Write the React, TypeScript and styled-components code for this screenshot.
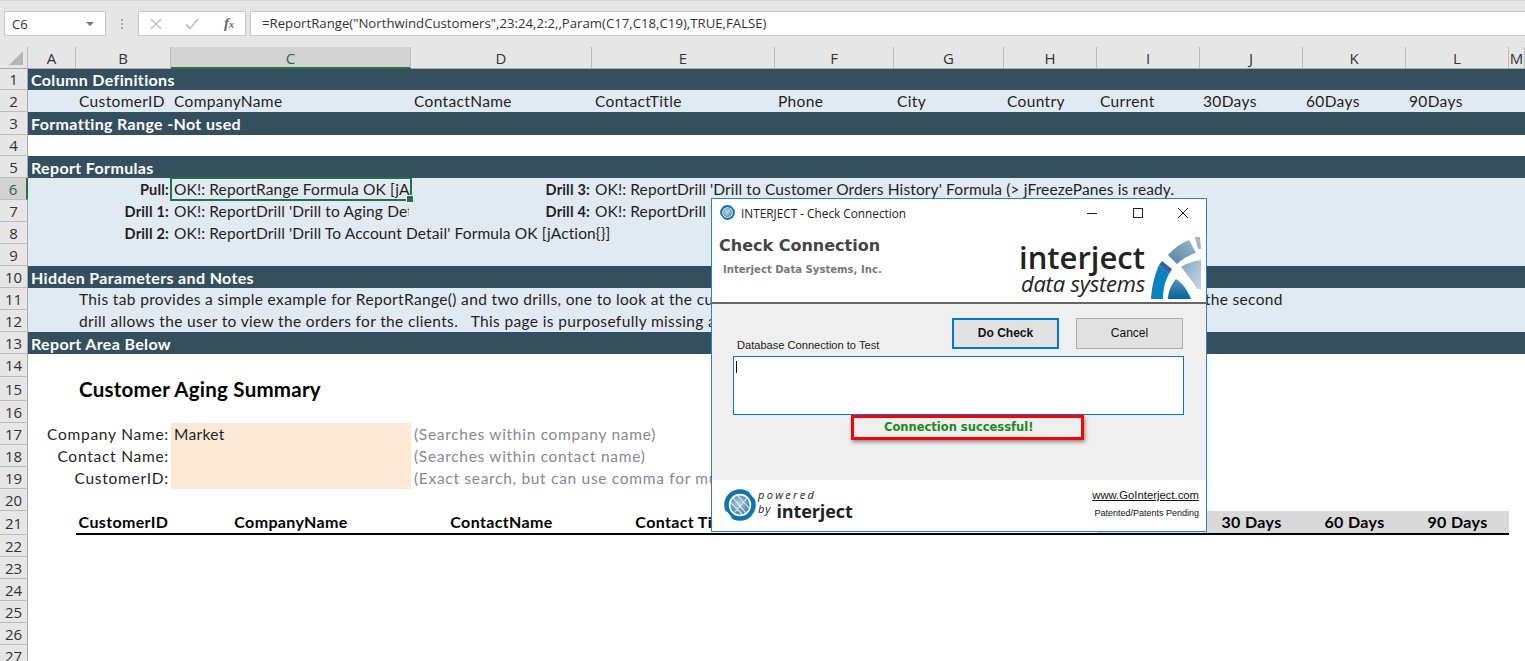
import React from 'react';
import styled, { createGlobalStyle, css } from 'styled-components';

const SHEET_FONT = `'Lato', 'Open Sans', sans-serif`;
const UI_FONT = `'Open Sans', 'Liberation Sans', sans-serif`;
const COLUMNS = '28px 48px 95px 240px 181px 183px 119px 110px 93px 103px 103px 103px 103px 1fr';
const HEADERS = ['A', 'B', 'C', 'D', 'E', 'F', 'G', 'H', 'I', 'J', 'K', 'L', 'M'];

// Rows are 22px unless the sheet says otherwise
const ROW_HEIGHTS: { [n: number]: number } = { 1: 21, 3: 23, 4: 21, 14: 23, 15: 24, 21: 24 };
const heightOf = (n: number) => ROW_HEIGHTS[n] || 22;

type Tone = 'plain' | 'dark' | 'light';
type CellKind = 'text' | 'heading' | 'label' | 'status';

type CellType = {
  col: number,
  span?: number,
  text: string,
  kind?: CellKind,
  clip?: boolean,
};

type RowType = {
  n: number,
  tone?: Tone,
  cells?: CellType[],
};

const ROWS: RowType[] = [
  { n: 1, tone: 'dark', cells: [{ col: 1, span: 4, text: 'Column Definitions', kind: 'heading' }] },
  {
    n: 2,
    tone: 'light',
    cells: [
      { col: 2, text: 'CustomerID' },
      { col: 3, text: 'CompanyName' },
      { col: 4, text: 'ContactName' },
      { col: 5, text: 'ContactTitle' },
      { col: 6, text: 'Phone' },
      { col: 7, text: 'City' },
      { col: 8, text: 'Country' },
      { col: 9, text: 'Current' },
      { col: 10, text: '30Days' },
      { col: 11, text: '60Days' },
      { col: 12, text: '90Days' },
    ],
  },
  { n: 3, tone: 'dark', cells: [{ col: 1, span: 4, text: 'Formatting Range -Not used', kind: 'heading' }] },
  { n: 4 },
  { n: 5, tone: 'dark', cells: [{ col: 1, span: 4, text: 'Report Formulas', kind: 'heading' }] },
  {
    n: 6,
    tone: 'light',
    cells: [
      { col: 2, text: 'Pull:', kind: 'label' },
      { col: 3, text: 'OK!: ReportRange Formula OK [jAction{}]', kind: 'status', clip: true },
      { col: 4, text: 'Drill 3:', kind: 'label' },
      { col: 5, text: `OK!: ReportDrill 'Drill to Customer Orders History' Formula (> jFreezePanes is ready.`, kind: 'status' },
    ],
  },
  {
    n: 7,
    tone: 'light',
    cells: [
      { col: 2, text: 'Drill 1:', kind: 'label' },
      { col: 3, text: `OK!: ReportDrill 'Drill to Aging Detail' Formula OK`, kind: 'status', clip: true },
      { col: 4, text: 'Drill 4:', kind: 'label' },
      { col: 5, text: `OK!: ReportDrill 'Drill to Orders' Formula OK`, kind: 'status' },
    ],
  },
  {
    n: 8,
    tone: 'light',
    cells: [
      { col: 2, text: 'Drill 2:', kind: 'label' },
      { col: 3, text: `OK!: ReportDrill 'Drill To Account Detail' Formula OK [jAction{}]`, kind: 'status' },
    ],
  },
  { n: 9, tone: 'light' },
  { n: 10, tone: 'dark', cells: [{ col: 1, span: 4, text: 'Hidden Parameters and Notes', kind: 'heading' }] },
  {
    n: 11,
    tone: 'light',
    cells: [
      { col: 2, text: 'This tab provides a simple example for ReportRange() and two drills, one to look at the customer aging detail and the account information for every client, and the second' },
    ],
  },
  {
    n: 12,
    tone: 'light',
    cells: [
      { col: 2, text: 'drill allows the user to view the orders for the clients.   This page is purposefully missing a' },
    ],
  },
  { n: 13, tone: 'dark', cells: [{ col: 1, span: 4, text: 'Report Area Below', kind: 'heading' }] },
];

const FILTERS = [
  { n: 17, label: 'Company Name:', value: 'Market', hint: '(Searches within company name)' },
  { n: 18, label: 'Contact Name:', value: '', hint: '(Searches within contact name)' },
  { n: 19, label: 'CustomerID:', value: '', hint: '(Exact search, but can use comma for multiple)' },
];

const TABLE_HEADERS = [
  { col: 2, text: 'CustomerID' },
  { col: 3, text: 'CompanyName' },
  { col: 4, text: 'ContactName' },
  { col: 5, text: 'Contact Title' },
  { col: 6, text: 'Phone' },
  { col: 7, text: 'City' },
  { col: 8, text: 'Country' },
  { col: 9, text: 'Current', gray: true },
  { col: 10, text: '30 Days', gray: true },
  { col: 11, text: '60 Days', gray: true },
  { col: 12, text: '90 Days', gray: true },
];

const LogoMark = () => (
  <svg width="52" height="62" viewBox="0 0 52 62">
    <defs>
      <linearGradient id="arcTop" x1="0" y1="1" x2="1" y2="0">
        <stop offset="0" stopColor="#4f80a0" />
        <stop offset="1" stopColor="#9db9ca" />
      </linearGradient>
      <linearGradient id="panel" x1="0" y1="0" x2="1" y2="1">
        <stop offset="0" stopColor="#7fa6bf" />
        <stop offset="1" stopColor="#c6d8e2" />
      </linearGradient>
      <linearGradient id="wedge" x1="0" y1="0" x2="0" y2="1">
        <stop offset="0" stopColor="#5c93b2" />
        <stop offset="1" stopColor="#00659f" />
      </linearGradient>
    </defs>
    <path d="M2 62 C3 48 6 37 10 28 L20 37 C16 44 14 52 14 62 Z" fill="#0a82bf" />
    <path d="M10 28 L13 24 L23 32 L20 37 Z" fill="#2d62ad" />
    <path d="M19 18 C25 11 32 6 40 3 L47 16 C40 18 33 22 28 27 Z" fill="url(#arcTop)" />
    <path d="M46 0 L51 0 L52 12 L49 12 Z" fill="#9db9ca" />
    <path d="M32 30 C38 26 45 24 52 23 L52 52 L48 52 C44 45 38 37 32 30 Z" fill="url(#panel)" />
    <path d="M27 42 C33 46 38 52 42 62 L19 62 C19 55 22 48 27 42 Z" fill="url(#wedge)" />
  </svg>
);

const Globe = ({ size, id }: { size: number, id: string }) => (
  <svg width={size} height={size} viewBox="0 0 32 32">
    <defs>
      <radialGradient id={id} cx="0.45" cy="0.4" r="0.7">
        <stop offset="0" stopColor="#b4cddd" />
        <stop offset="1" stopColor="#2f76a5" />
      </radialGradient>
    </defs>
    <circle cx="16" cy="16" r="13.5" fill="none" stroke="#0f74ad" strokeWidth="4.5" />
    <circle cx="16" cy="16" r="9.5" fill={`url(#${id})`} />
    <path d="M9 9 L22 24 M14 7 L25 19 M7 14 L18 25 M11 23 L23 9" stroke="#e3edf3" strokeWidth="1.1" />
    <path d="M26 3 L31 9 M2 23 L7 29" stroke="#ffffff" strokeWidth="2" />
  </svg>
);

export default function App() {
  return (
    <Page>
      <GlobalStyle />
      <FormulaBar>
        <NameBox>
          <span>C6</span>
          <Caret />
        </NameBox>
        <Grip>
          <i />
          <i />
          <i />
        </Grip>
        <FormulaButtons>
          <svg width="12" height="12" viewBox="0 0 12 12">
            <path d="M1 1 L11 11 M11 1 L1 11" stroke="#c4c4c4" strokeWidth="1.6" />
          </svg>
          <svg width="14" height="12" viewBox="0 0 14 12">
            <path d="M1 6.5 L5 10.5 L13 1" stroke="#c4c4c4" strokeWidth="1.8" fill="none" />
          </svg>
          <FxLabel>f<sub>x</sub></FxLabel>
        </FormulaButtons>
        <FormulaInput>=ReportRange("NorthwindCustomers",23:24,2:2,,Param(C17,C18,C19),TRUE,FALSE)</FormulaInput>
      </FormulaBar>

      <HeaderRow>
        <Corner>
          <svg width="14" height="14" viewBox="0 0 14 14">
            <path d="M14 0 L14 14 L0 14 Z" fill="#b5b5b5" />
          </svg>
        </Corner>
        {HEADERS.map((h) => (
          <ColHeader key={h} $active={h === 'C'}>{h}</ColHeader>
        ))}
      </HeaderRow>

      <Sheet>
        {ROWS.map((row) => (
          <Row key={row.n} $tone={row.tone || 'plain'} $height={heightOf(row.n)}>
            <RowHeader $active={row.n === 6}>{row.n}</RowHeader>
            {(row.cells || []).map((c, i) => (
              <Cell
                key={i}
                $col={c.col}
                $span={c.span || 1}
                $kind={c.kind || 'text'}
                $selected={row.n === 6 && c.col === 3}
              >
                <CellText $clip={!!c.clip}>{c.text}</CellText>
              </Cell>
            ))}
          </Row>
        ))}

        <Row $tone="plain" $height={heightOf(14)}><RowHeader>14</RowHeader></Row>
        <Row $tone="plain" $height={heightOf(15)}>
          <RowHeader>15</RowHeader>
          <ReportTitle>Customer Aging Summary</ReportTitle>
        </Row>
        <Row $tone="plain" $height={heightOf(16)}><RowHeader>16</RowHeader></Row>

        {FILTERS.map((f) => (
          <Row key={f.n} $tone="plain" $height={heightOf(f.n)}>
            <RowHeader>{f.n}</RowHeader>
            <FilterLabel>{f.label}</FilterLabel>
            <InputCell>{f.value}</InputCell>
            <HintCell>{f.hint}</HintCell>
          </Row>
        ))}

        <Row $tone="plain" $height={heightOf(20)}><RowHeader>20</RowHeader></Row>
        <Row $tone="plain" $height={heightOf(21)}>
          <RowHeader>21</RowHeader>
          {TABLE_HEADERS.map((h) => (
            <TableHead key={h.col} $col={h.col} $gray={!!h.gray}>{h.text}</TableHead>
          ))}
        </Row>
        {[22, 23, 24, 25, 26, 27].map((n) => (
          <Row key={n} $tone="plain" $height={heightOf(n)}><RowHeader>{n}</RowHeader></Row>
        ))}
      </Sheet>

      <Dialog>
        <TitleBar>
          <Globe size={15} id="globeSmall" />
          <TitleText>INTERJECT - Check Connection</TitleText>
          <WindowButtons>
            <svg width="12" height="12" viewBox="0 0 12 12"><path d="M1 6.5 L11 6.5" stroke="#222" strokeWidth="1" /></svg>
            <svg width="12" height="12" viewBox="0 0 12 12"><rect x="1.5" y="1.5" width="9" height="9" fill="none" stroke="#222" strokeWidth="1" /></svg>
            <svg width="12" height="12" viewBox="0 0 12 12"><path d="M1 1 L11 11 M11 1 L1 11" stroke="#222" strokeWidth="1" /></svg>
          </WindowButtons>
        </TitleBar>

        <Banner>
          <BannerText>
            <BannerTitle>Check Connection</BannerTitle>
            <BannerSub>Interject Data Systems, Inc.</BannerSub>
          </BannerText>
          <BrandLogo>
            <BrandText>
              <BrandName>interject</BrandName>
              <BrandTag>data systems</BrandTag>
            </BrandText>
            <LogoMark />
          </BrandLogo>
        </Banner>

        <DialogBody>
          <ButtonRow>
            <FieldLabel>Database Connection to Test</FieldLabel>
            <DialogButton $primary>Do Check</DialogButton>
            <DialogButton>Cancel</DialogButton>
          </ButtonRow>
          <TextBox><TextCaret /></TextBox>
          <StatusWrap>
            <StatusBox>Connection successful!</StatusBox>
          </StatusWrap>
        </DialogBody>

        <DialogFooter>
          <Powered>
            <Globe size={32} id="globeLarge" />
            <PoweredText>
              <PoweredTop>powered</PoweredTop>
              <PoweredBottom>
                <em>by</em>
                <strong>interject</strong>
              </PoweredBottom>
            </PoweredText>
          </Powered>
          <FooterLinks>
            <FooterLink>www.GoInterject.com</FooterLink>
            <FooterNote>Patented/Patents Pending</FooterNote>
          </FooterLinks>
        </DialogFooter>
      </Dialog>
    </Page>
  );
}

const GlobalStyle = createGlobalStyle`
  html, body {
    margin: 0;
    padding: 0;
    background: #ffffff;
    overflow: hidden;
  }
  * {
    box-sizing: border-box;
  }
`;

const Page = styled.div`
  position: relative;
  width: 1525px;
  height: 661px;
  overflow: hidden;
  font-family: ${SHEET_FONT};
  background: #ffffff;
`;

const FormulaBar = styled.div`
  display: flex;
  align-items: center;
  height: 47px;
  padding: 0 0 1px 4px;
  background: #e6e6e6;
  border-top: 1px solid #d8d8d8;
`;

const boxStyle = css`
  height: 25px;
  background: #ffffff;
  border: 1px solid #c9c9c9;
`;

const NameBox = styled.div`
  ${boxStyle}
  width: 102px;
  display: flex;
  align-items: center;
  justify-content: space-between;
  padding: 0 11px 0 7px;
  font-family: ${UI_FONT};
  font-size: 13px;
  color: #333333;
`;

const Caret = styled.div`
  width: 0;
  height: 0;
  border-left: 4px solid transparent;
  border-right: 4px solid transparent;
  border-top: 4px solid #777777;
`;

const Grip = styled.div`
  width: 32px;
  display: flex;
  flex-direction: column;
  align-items: center;
  gap: 2px;

  > i {
    width: 2px;
    height: 2px;
    background: #a8a8a8;
  }
`;

const FormulaButtons = styled.div`
  ${boxStyle}
  width: 108px;
  display: flex;
  align-items: center;
  justify-content: space-between;
  padding: 0 11px 0 11px;

  > svg:nth-child(2) {
    margin-left: -3px;
  }
`;

const FxLabel = styled.div`
  font-family: 'Liberation Serif', serif;
  font-size: 15px;
  font-style: italic;
  font-weight: 700;
  color: #6a6a6a;
  line-height: 15px;

  > sub {
    font-size: 10px;
    vertical-align: baseline;
  }
`;

const FormulaInput = styled.div`
  ${boxStyle}
  flex: 1;
  margin-left: 4px;
  padding-left: 11px;
  border-right: none;
  line-height: 23px;
  font-family: ${UI_FONT};
  font-size: 13.2px;
  color: #333333;
  white-space: nowrap;
`;

const HeaderRow = styled.div`
  display: grid;
  grid-template-columns: ${COLUMNS};
  height: 22px;
  background: #e6e6e6;
  border-bottom: 1px solid #a9a9a9;
`;

const Corner = styled.div`
  display: flex;
  align-items: flex-end;
  justify-content: flex-end;
  padding: 0 4px 3px 0;
  border-right: 1px solid #bcbcbc;
`;

const ColHeader = styled.div<{ $active?: boolean }>`
  display: flex;
  align-items: center;
  justify-content: center;
  height: 21px;
  font-family: ${UI_FONT};
  font-size: 15px;
  color: ${(props) => (props.$active ? '#1e6b44' : '#333333')};
  background: ${(props) => (props.$active ? '#d2d2d2' : 'transparent')};
  border-right: 1px solid #bcbcbc;
  box-shadow: ${(props) => (props.$active ? 'inset 0 -1px 0 #217346, 0 1px 0 #217346' : 'none')};
`;

const Sheet = styled.div`
  width: 100%;
`;

const toneColors = {
  plain: { bg: '#ffffff', fg: '#1f1f1f' },
  dark: { bg: '#344f5e', fg: '#ffffff' },
  light: { bg: '#e1eaf0', fg: '#1f1f1f' },
};

const Row = styled.div<{ $tone: Tone, $height: number }>`
  display: grid;
  grid-template-columns: ${COLUMNS};
  height: ${(props) => props.$height}px;
  align-items: center;
  background: ${(props) => toneColors[props.$tone].bg};
  color: ${(props) => toneColors[props.$tone].fg};
  font-size: 15.5px;
  letter-spacing: 0.35px;
  white-space: pre;
`;

const RowHeader = styled.div<{ $active?: boolean }>`
  grid-column: 1;
  grid-row: 1;
  align-self: stretch;
  display: flex;
  align-items: center;
  justify-content: center;
  font-family: ${UI_FONT};
  font-size: 15px;
  letter-spacing: 0;
  color: ${(props) => (props.$active ? '#1e6b44' : '#333333')};
  background: ${(props) => (props.$active ? '#d2d2d2' : '#e6e6e6')};
  border-right: ${(props) => (props.$active ? '2px solid #217346' : '1px solid #a9a9a9')};
  border-bottom: 1px solid #bcbcbc;
`;

const cellKinds = {
  text: css`
    font-weight: 400;
  `,
  status: css`
    font-weight: 400;
    letter-spacing: 0.12px;
  `,
  heading: css`
    font-size: 16px;
    font-weight: 700;
  `,
  label: css`
    justify-content: flex-end;
    font-size: 14.5px;
    font-weight: 700;
    letter-spacing: 0.2px;
  `,
};

const Cell = styled.div<{
  $col: number,
  $span: number,
  $kind: CellKind,
  $selected: boolean,
}>`
  grid-column: ${(props) => props.$col + 1} / span ${(props) => props.$span};
  grid-row: 1;
  align-self: stretch;
  display: flex;
  align-items: center;
  padding: 0 2px 0 3px;
  position: relative;
  min-width: 0;
  ${(props) => cellKinds[props.$kind]}
  ${(props) => props.$selected && css`
    padding-right: 0;
    outline: 2px solid #217346;
    outline-offset: -1px;

    &::after {
      content: '';
      position: absolute;
      right: -3px;
      bottom: -3px;
      width: 6px;
      height: 6px;
      background: #217346;
      border: 1px solid #ffffff;
    }
  `}
`;

const CellText = styled.div<{ $clip: boolean }>`
  min-width: 0;
  overflow: ${(props) => (props.$clip ? 'hidden' : 'visible')};
`;

const ReportTitle = styled.div`
  grid-column: 3 / span 4;
  grid-row: 1;
  padding-left: 3px;
  font-size: 20.5px;
  font-weight: 700;
  letter-spacing: 0.25px;
  color: #000000;
`;

const FilterLabel = styled.div`
  grid-column: 2 / span 2;
  grid-row: 1;
  padding-right: 2px;
  text-align: right;
  letter-spacing: 0.75px;
`;

const InputCell = styled.div`
  grid-column: 4;
  grid-row: 1;
  align-self: stretch;
  display: flex;
  align-items: center;
  padding-left: 3px;
  background: #fde9d3;
`;

const HintCell = styled.div`
  grid-column: 5 / span 4;
  grid-row: 1;
  padding-left: 3px;
  color: #8b8690;
  letter-spacing: 0.7px;
`;

const TableHead = styled.div<{ $col: number, $gray: boolean }>`
  grid-column: ${(props) => props.$col + 1};
  grid-row: 1;
  align-self: stretch;
  display: flex;
  align-items: center;
  justify-content: center;
  padding-bottom: 1px;
  font-size: 16px;
  font-weight: 700;
  color: #000000;
  background: ${(props) => (props.$gray ? '#d9d9d9' : 'transparent')};
  border-bottom: 2px solid #000000;
`;

const Dialog = styled.div`
  position: absolute;
  left: 711px;
  top: 198px;
  width: 496px;
  height: 334px;
  display: flex;
  flex-direction: column;
  background: #ffffff;
  border: 1px solid #1f86d6;
`;

const TitleBar = styled.div`
  display: flex;
  align-items: center;
  height: 27px;
  padding: 0 17px 0 8px;
  flex-shrink: 0;
`;

const TitleText = styled.div`
  margin-left: 6px;
  font-family: ${UI_FONT};
  font-size: 11.8px;
  color: #222222;
`;

const WindowButtons = styled.div`
  margin-left: auto;
  display: flex;
  gap: 33.5px;
`;

const Banner = styled.div`
  display: flex;
  justify-content: space-between;
  height: 78px;
  padding: 0 5px 0 7px;
  flex-shrink: 0;
  border-bottom: 2px solid #666666;
`;

const BannerText = styled.div`
  padding-top: 10px;
`;

const BannerTitle = styled.div`
  font-family: 'DejaVu Sans', sans-serif;
  font-size: 16px;
  font-weight: 700;
  color: #444444;
`;

const BannerSub = styled.div`
  margin: 9px 0 0 4px;
  font-family: 'DejaVu Sans', sans-serif;
  font-size: 10.1px;
  font-weight: 700;
  color: #777777;
`;

const BrandLogo = styled.div`
  display: flex;
  align-items: flex-end;
  height: 73px;
`;

const BrandText = styled.div`
  display: flex;
  flex-direction: column;
  align-items: flex-end;
  margin: 0 4px 4px 0;
`;

const BrandName = styled.div`
  font-family: 'Open Sans', sans-serif;
  font-size: 31px;
  line-height: 29px;
  font-weight: 600;
  color: #222222;
`;

const BrandTag = styled.div`
  font-family: 'Open Sans', sans-serif;
  font-size: 22px;
  line-height: 23px;
  font-style: italic;
  font-weight: 400;
  letter-spacing: -0.2px;
  color: #222222;
`;

const DialogBody = styled.div`
  flex: 1;
  padding: 14px 22px 0 21px;
  background: #efefef;
`;

const ButtonRow = styled.div`
  display: flex;
  align-items: flex-end;
  height: 31px;
  gap: 17px;
  margin-right: 1px;
`;

const FieldLabel = styled.div`
  margin: 0 auto -2px 4px;
  font-family: 'Liberation Sans', sans-serif;
  font-size: 11.1px;
  color: #222222;
`;

const DialogButton = styled.div<{ $primary?: boolean }>`
  width: 107px;
  height: 31px;
  padding-bottom: 1px;
  display: flex;
  align-items: center;
  justify-content: center;
  font-family: 'Liberation Sans', sans-serif;
  font-size: 12px;
  font-weight: ${(props) => (props.$primary ? 700 : 400)};
  color: #111111;
  background: #e1e1e1;
  border: ${(props) => (props.$primary ? '2px solid #0078d7' : '1px solid #adadad')};
`;

const TextBox = styled.div`
  height: 59px;
  margin-top: 7px;
  padding: 4px 2px;
  background: #ffffff;
  border: 1px solid #0078d7;
`;

const TextCaret = styled.div`
  width: 1px;
  height: 12px;
  background: #000000;
`;

const StatusWrap = styled.div`
  position: relative;
  height: 0;
`;

const StatusBox = styled.div`
  position: absolute;
  left: 118px;
  top: 0;
  width: 233px;
  height: 25px;
  padding-left: 30px;
  line-height: 19px;
  font-family: 'DejaVu Sans', sans-serif;
  font-size: 11.5px;
  font-weight: 700;
  color: #1a8a1a;
  border: 3px solid #ff0000;
  box-shadow: 1px 2px 4px rgba(0, 0, 0, 0.45);
  white-space: nowrap;
`;

const DialogFooter = styled.div`
  height: 51px;
  flex-shrink: 0;
  display: flex;
  justify-content: space-between;
  padding: 9px 7px 0 12px;
`;

const Powered = styled.div`
  display: flex;
  align-items: flex-start;
  gap: 2px;
`;

const PoweredText = styled.div`
  font-family: 'Open Sans', sans-serif;
  color: #222222;
`;

const PoweredTop = styled.div`
  font-size: 11px;
  line-height: 12px;
  font-style: italic;
  letter-spacing: 2.3px;
`;

const PoweredBottom = styled.div`
  display: flex;
  align-items: flex-start;
  gap: 5px;
  line-height: 20px;

  > em {
    margin-top: 1px;
    font-size: 11px;
    line-height: 14px;
    letter-spacing: 1px;
  }

  > strong {
    font-size: 18px;
    line-height: 20px;
    font-weight: 700;
    letter-spacing: -0.1px;
  }
`;

const FooterLinks = styled.div`
  display: flex;
  flex-direction: column;
  align-items: flex-end;
  font-family: 'Liberation Sans', sans-serif;
  color: #111111;
`;

const FooterLink = styled.div`
  font-size: 11.3px;
  text-decoration: underline;
`;

const FooterNote = styled.div`
  margin-top: 7px;
  font-size: 9px;
`;
